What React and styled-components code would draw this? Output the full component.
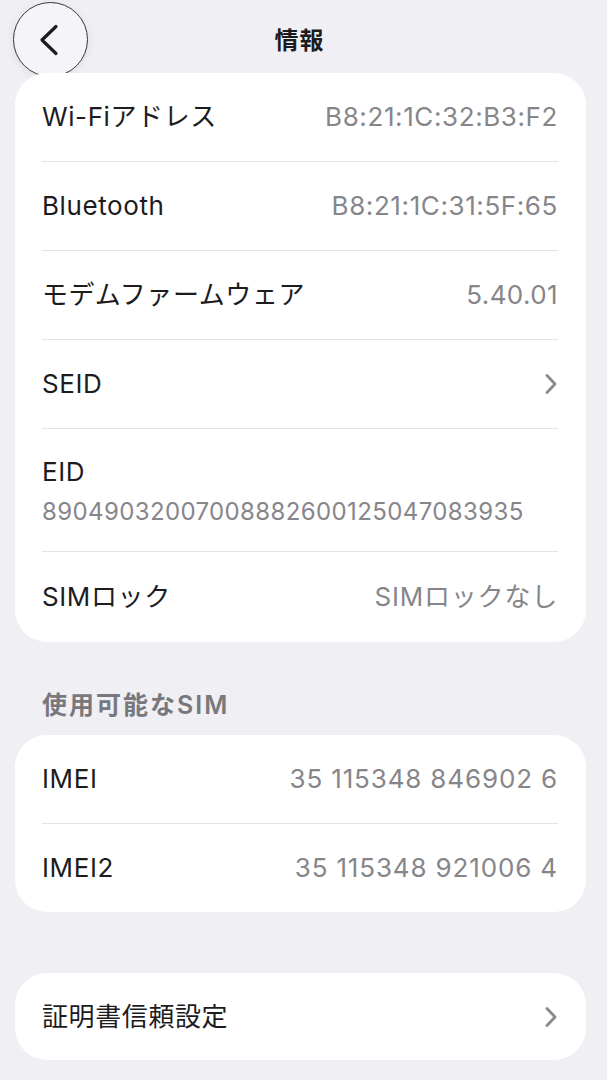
import React from "react"
import styled, { createGlobalStyle } from "styled-components"

const GlobalStyle = createGlobalStyle`
  html, body {
    margin: 0;
    padding: 0;
    background: #efeff4;
  }
  body {
    font-family: "Inter", "Noto Sans CJK JP", sans-serif;
    color: #1c1c1e;
    -webkit-font-smoothing: antialiased;
  }
`

const Page = styled.div`
  width: 607px;
  min-height: 1080px;
  background: #efeff4;
  padding: 0 21px 0 15px;
  box-sizing: border-box;
  display: flex;
  flex-direction: column;
`

const Header = styled.header`
  height: 73px;
  display: grid;
  grid-template-columns: 1fr auto 1fr;
  align-items: center;
  margin-left: -2px;
`

const BackButton = styled.button`
  width: 75px;
  height: 75px;
  margin-top: 2px;
  border-radius: 50%;
  border: 1.5px solid #3a3a3c;
  background: #f5f5f7;
  box-shadow: 0 2px 8px rgba(0, 0, 0, 0.08);
  display: flex;
  align-items: center;
  justify-content: center;
  padding: 0 4px 0 0;
  justify-self: start;
`

const Title = styled.h1`
  margin: 0;
  font-size: 24px;
  font-weight: 700;
  letter-spacing: 1px;
  color: #1c1c1e;
`

const Card = styled.section`
  background: #ffffff;
  border-radius: 32px;
  padding: 0 28px 0 27px;
  margin-top: ${(p) => p.$top || 0}px;
`

const Row = styled.div`
  height: ${(p) => p.$h || 88}px;
  display: flex;
  align-items: center;
  justify-content: space-between;
  border-bottom: 1px solid #e2e2e5;
  &:last-child {
    border-bottom: none;
  }
`

const StackRow = styled.div`
  padding: 26px 0 22px;
  display: flex;
  flex-direction: column;
  gap: 6px;
  border-bottom: 1px solid #e2e2e5;
`

const Label = styled.span`
  font-size: 26px;
  line-height: 34px;
  color: #1c1c1e;
  letter-spacing: 0.6px;
`

const Value = styled.span`
  font-size: ${(p) => p.$size || 26}px;
  line-height: 34px;
  color: #86868a;
  letter-spacing: ${(p) => p.$ls ?? 0.6}px;
`

const SectionTitle = styled.div`
  padding: 48px 0 0 27px;
  font-size: 25px;
  line-height: 30px;
  font-weight: 600;
  letter-spacing: 2px;
  color: #78787c;
`

function Chevron() {
  return (
    <svg width="14" height="22" viewBox="0 0 14 22" fill="none">
      <path d="M3 2.5 L11 11 L3 19.5" stroke="#8a8a8e" strokeWidth="2.8" strokeLinecap="round" strokeLinejoin="round" />
    </svg>
  )
}

function BackIcon() {
  return (
    <svg width="22" height="32" viewBox="0 0 22 32" fill="none">
      <path d="M18 2.5 L4 16 L18 29.5" stroke="#1c1c1e" strokeWidth="3.2" strokeLinecap="round" strokeLinejoin="round" />
    </svg>
  )
}

export default function App() {
  return (
    <>
      <GlobalStyle />
      <Page>
        <Header>
          <BackButton aria-label="戻る">
            <BackIcon />
          </BackButton>
          <Title>情報</Title>
          <span />
        </Header>

        <Card>
          <Row>
            <Label>Wi-Fiアドレス</Label>
            <Value>B8:21:1C:32:B3:F2</Value>
          </Row>
          <Row>
            <Label>Bluetooth</Label>
            <Value>B8:21:1C:31:5F:65</Value>
          </Row>
          <Row>
            <Label>モデムファームウェア</Label>
            <Value $ls={0.4}>5.40.01</Value>
          </Row>
          <Row>
            <Label>SEID</Label>
            <Chevron />
          </Row>
          <StackRow>
            <Label>EID</Label>
            <Value $size={24} $ls={0.38}>89049032007008882600125047083935</Value>
          </StackRow>
          <Row $h={90}>
            <Label>SIMロック</Label>
            <Value $ls={0.8}>SIMロックなし</Value>
          </Row>
        </Card>

        <SectionTitle>使用可能なSIM</SectionTitle>
        <Card $top={15}>
          <Row>
            <Label>IMEI</Label>
            <Value $ls={0.85}>35 115348 846902 6</Value>
          </Row>
          <Row>
            <Label>IMEI2</Label>
            <Value $ls={0.85}>35 115348 921006 4</Value>
          </Row>
        </Card>

        <Card $top={61}>
          <Row $h={87}>
            <Label>証明書信頼設定</Label>
            <Chevron />
          </Row>
        </Card>
      </Page>
    </>
  )
}
